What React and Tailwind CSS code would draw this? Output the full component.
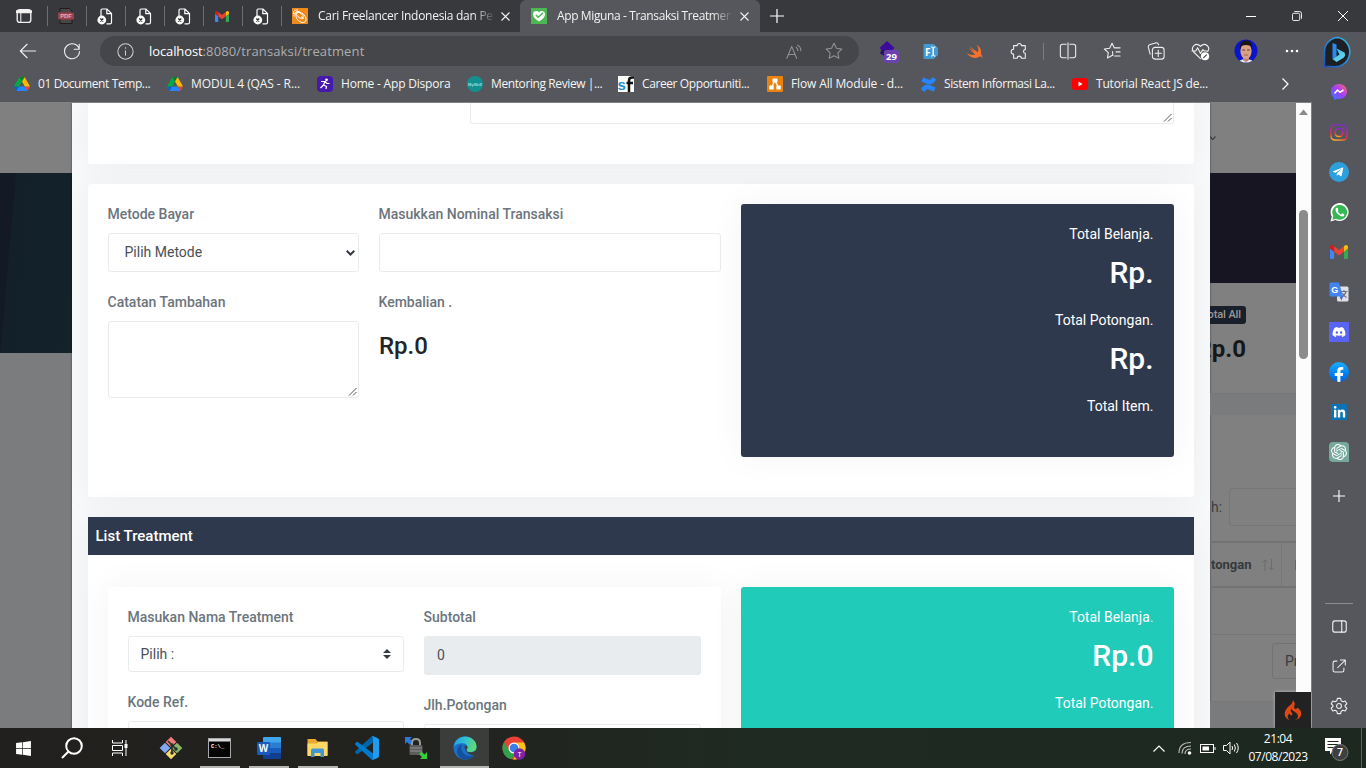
import React from "react";
import {
  FaWindows, FaFacebookF, FaTelegramPlane, FaDiscord, FaLinkedinIn,
} from "react-icons/fa";
import { SiOpenai, SiCodeigniter, SiConfluence } from "react-icons/si";

const UI = "font-['Open_Sans','Noto_Sans',sans-serif]";

const Line = ({ size = 20, w = 1.2, children, className = "" }) => (
  <svg width={size} height={size} viewBox="0 0 20 20" fill="none" stroke="currentColor" strokeWidth={w} strokeLinecap="round" strokeLinejoin="round" className={"shrink-0 " + className}>
    {children}
  </svg>
);

const Drive = () => (
  <svg width="16" height="14" viewBox="0 0 87.3 78" className="shrink-0">
    <path d="m6.6 66.85 3.85 6.65c.8 1.4 1.95 2.5 3.3 3.3l13.75-23.8h-27.5c0 1.55.4 3.1 1.2 4.5z" fill="#0066da" />
    <path d="m43.65 25-13.75-23.8c-1.35.8-2.5 1.9-3.3 3.3l-25.4 44a9.06 9.06 0 0 0-1.2 4.5h27.5z" fill="#00ac47" />
    <path d="m73.55 76.8c1.35-.8 2.5-1.9 3.3-3.3l1.6-2.75 7.65-13.25c.8-1.4 1.2-2.95 1.2-4.5h-27.5l5.85 11.5z" fill="#ea4335" />
    <path d="m43.65 25 13.75-23.8c-1.35-.8-2.9-1.2-4.5-1.2h-18.5c-1.6 0-3.15.45-4.5 1.2z" fill="#00832d" />
    <path d="m59.8 53h-32.3l-13.75 23.8c1.35.8 2.9 1.2 4.5 1.2h50.8c1.6 0 3.15-.45 4.5-1.2z" fill="#2684fc" />
    <path d="m73.4 26.5-12.7-22c-.8-1.4-1.95-2.5-3.3-3.3l-13.75 23.8 16.15 28h27.45c0-1.55-.4-3.1-1.2-4.5z" fill="#ffba00" />
  </svg>
);

const Gmail = ({ w = 14, h = 11 }) => (
  <svg width={w} height={h} viewBox="52 42 88 66" preserveAspectRatio="none" className="shrink-0">
    <path fill="#4285f4" d="M58 108h14V74L52 59v43c0 3.32 2.69 6 6 6" />
    <path fill="#34a853" d="M120 108h14c3.32 0 6-2.69 6-6V59l-20 15" />
    <path fill="#fbbc04" d="M120 48v26l20-15v-8c0-7.42-8.47-11.65-14.4-7.2" />
    <path fill="#ea4335" d="M72 74V48l24 18 24-18v26L96 92" />
    <path fill="#c5221f" d="M52 51v8l20 15V48l-5.6-4.2c-5.94-4.45-14.4-.22-14.4 7.2" />
  </svg>
);

const BrokenPage = () => (
  <svg width="16" height="17" viewBox="0 0 16 17" fill="none" className="shrink-0">
    <path d="M4 8V2.2Q4 1 5.2 1H10l4.500 4.500V14.600q0 1.200-1.200 1.200H9.500M9.800 1v4.700h4.700" stroke="#fff" strokeWidth="1.200" />
    <circle cx="4.800" cy="12" r="4.400" fill="#fff" />
    <path d="M3.300 10.500l3 3m0-3l-3 3" stroke="#222" strokeWidth="1.200" />
  </svg>
);

const Pdf = () => (
  <svg width="16" height="16" viewBox="0 0 16 16" className="shrink-0">
    <path d="M2 .5h9.500L14 3v12.500H2z" fill="#4a4547" stroke="#1f1c1e" />
    <rect x="0" y="4.500" width="16" height="7" rx="1" fill="#a0404a" />
    <text x="8" y="10.200" textAnchor="middle" fontSize="5.800" fontWeight="700" fontFamily="Liberation Sans" fill="#e0b4b4">PDF</text>
  </svg>
);

const Pinned = ({ children }) => (
  <div className="flex h-5 w-[39px] items-center justify-center border-l border-[#6d6e72] pr-[2px]">{children}</div>
);

const CloseX = () => (
  <svg width="9" height="9" viewBox="0 0 9 9" stroke="#f0f0f0" strokeWidth="1.100" className="shrink-0"><path d="M.5.5l8 8M8.500.5l-8 8" /></svg>
);

function TabBar() {
  return (
    <div className="flex h-8 shrink-0 items-center bg-[#38393d] text-[#f2f2f2]">
      <div className="flex w-[47px] justify-center">
        <Line size={16}><rect x="1.500" y="2" width="17" height="16" rx="3" strokeWidth="1.700" /><path d="M1.500 4.500h17" strokeWidth="4" /><path d="M6 5v12.500" strokeWidth="1.300" /></Line>
      </div>
      <Pinned><Pdf /></Pinned>
      <Pinned><BrokenPage /></Pinned>
      <Pinned><BrokenPage /></Pinned>
      <Pinned><BrokenPage /></Pinned>
      <Pinned><Gmail /></Pinned>
      <Pinned><BrokenPage /></Pinned>
      <div className="flex h-5 w-[239px] items-center border-l border-[#6d6e72] pl-[10px]">
        <svg width="16" height="16" viewBox="0 0 16 16" className="shrink-0">
          <rect width="16" height="16" fill="#f08a1c" />
          <g fill="none" stroke="#fff" strokeWidth=".9"><ellipse cx="9" cy="9.500" rx="6" ry="4" transform="rotate(45 9 9.500)" /><ellipse cx="7.500" cy="7" rx="4.500" ry="2.200" transform="rotate(38 7.500 7)" /><path d="M1.500 6C1 3 3 1.500 6 2M2 8.500C1.500 5 4 3 8 4M9 8.500l3 2" /></g>
        </svg>
        <div className="ml-[10px] w-[175px] overflow-hidden whitespace-nowrap text-[12px] tracking-[-0.28px] [mask-image:linear-gradient(to_right,#000_155px,transparent_178px)]">Cari Freelancer Indonesia dan Pekerjaan</div>
        <div className="ml-[8px]"><CloseX /></div>
      </div>
      <div className="flex h-8 w-[240px] items-center rounded-t-md bg-[#56575c] pl-[11px]">
        <svg width="16" height="16" viewBox="0 0 16 16" className="shrink-0">
          <rect width="16" height="16" fill="#4db551" />
          <path d="M8 13.500C4 11 2 9 2 6.200C2 3 6 2 8 4.400C10 2 14 3 14 6.200C14 9 12 11 8 13.500z" fill="#fff" />
          <path d="M4.800 7l2.500 2.300L12 4.800" fill="none" stroke="#4db551" strokeWidth="1.500" />
        </svg>
        <div className="ml-[10px] w-[174px] overflow-hidden whitespace-nowrap text-[12px] tracking-[-0.38px] [mask-image:linear-gradient(to_right,#000_155px,transparent_176px)]">App Miguna - Transaksi Treatment</div>
        <div className="ml-[9px]"><CloseX /></div>
      </div>
      <div className="ml-[10px]"><svg width="14" height="14" viewBox="0 0 14 14" stroke="#fff" strokeWidth="1.200"><path d="M7 0v14M0 7h14" /></svg></div>
      <div className="ml-auto flex">
        <div className="flex w-[46px] items-center justify-center"><svg width="10" height="10"><path d="M0 5.500h10" stroke="#fff" /></svg></div>
        <div className="flex w-[46px] items-center justify-center"><svg width="10" height="10" viewBox="0 0 11 11" fill="none" stroke="#fff"><rect x=".5" y="2.500" width="8" height="8" rx="1.500" /><path d="M2.500.5H8q2.500 0 2.500 2.500v5.500" /></svg></div>
        <div className="flex w-[46px] items-center justify-center"><svg width="10" height="10" stroke="#fff"><path d="M0 0l10 10M10 0L0 10" /></svg></div>
      </div>
    </div>
  );
}

const Cell = ({ children }) => <div className="flex w-11 items-center justify-center">{children}</div>;

function Toolbar() {
  return (
    <div className="flex h-[38px] shrink-0 items-center bg-[#56575c] text-[#eeeeee]">
      <div className="flex w-[56px] justify-center"><Line size={18}><path d="M18.500 10H1.500M9 2.500L1.500 10 9 17.500" /></Line></div>
      <div className="flex w-8 justify-center"><Line size={18}><path d="M18 8A8.300 8.300 0 1 0 18.300 10.500M18 2.500V8h-5.500" /></Line></div>
      <div className="ml-3 flex h-[30px] w-[759px] items-center rounded-full bg-[#45464a] pl-[17px] pr-[16px]">
        <Line size={17} className="text-[#cfcfcf]"><circle cx="10" cy="10" r="9" /><path d="M10 9v5.500" /><path d="M10 5.800v.2" strokeWidth="1.800" /></Line>
        <div className="ml-[15px] text-[13px] leading-[18px] tracking-[0.13px] text-[#adaeb1]"><span className="tracking-[-0.1px] text-white">localhost</span>:8080/transaksi/treatment</div>
        <Line size={17} w={1.3} className="ml-auto text-[#909194]"><path d="M1 18L6.700 4 12.500 18M3 13.500h7.500M12 5q2 1.500 2 4M13.500 2.500q4 2 4 6.500" /></Line>
        <Line size={18} className="ml-[22px] text-[#909194]"><path d="M10 1.500l2.700 5.500 6 .9-4.400 4.200 1.100 6L10 15.300 4.600 18.100l1.100-6L1.300 7.900l6-.9z" /></Line>
      </div>
      <div className="ml-[6px] flex items-center">
        <Cell>
          <svg width="26" height="26" viewBox="0 0 26 26" className="ml-[5px] mt-1">
            <path d="M10 1l7.500 7L15 10.500l2 3-7 4-7-4 2-3L2.500 8z" fill="#3d0b9c" /><path d="M4.500 10h11l1.500 3-7 4-7-4z" fill="#251a50" />
            <rect x="7" y="10" width="15" height="13" rx="2.500" fill="#6b42ad" />
            <text x="14.500" y="20" textAnchor="middle" fontSize="9.500" fontWeight="700" fontFamily="Open Sans" fill="#fff">29</text>
          </svg>
        </Cell>
        <Cell>
          <svg width="15" height="17" viewBox="0 0 15 17" className="mr-px"><path d="M1.500 1h9L15 5v7l-4.500 4h-9Q.5 16 .5 15V2q0-1 1-1z" fill="#439bd4" /><text x="2" y="12.500" fontSize="10" fontWeight="700" fontFamily="Open Sans" fill="#fff">F</text><path d="M8 4h1.500l.7 1v7l-.7 1H8M12.500 4H11l-.8 1v7l.8 1h1.500" stroke="#fff" fill="none" /></svg>
        </Cell>
        <Cell>
          <svg width="16" height="15" viewBox="0 0 16 15"><path d="M9.500.5c4.500 3 5.200 6.500 4.300 9.300 1.800 2 1.700 3.700 1.400 4.200-1-1.800-2.500-1.600-3.300-1.100C7 15.300 2.300 13 0 9c3 2 6 2.500 8.300 1.300C5.500 8.300 3.200 5.500 1.800 3.500 4 5.300 6.200 7 7.500 7.800 6.200 6.400 4.300 4 3.300 2.300c2.700 2.700 6 5 7.600 6C12 5.500 11 2.500 9.500.5z" fill="#f4722c" /></svg>
        </Cell>
        <Cell><Line size={18}><path d="M4 4h4a2.300 2.300 0 1 1 4.600 0H17v4.500a2 2 0 0 0 0 4V18h-4.400a2.300 2.300 0 0 0-4.600 0H4v-4.500A2.500 2.500 0 1 1 4 8z" /></Line></Cell>
      </div>
      <div className="ml-[2px] h-[17px] w-px bg-[#7c7d81]" />
      <div className="ml-[2px] flex items-center">
        <Cell><Line size={18}><path d="M8 2.500H4Q1.500 2.500 1.500 5v10Q1.500 17.500 4 17.500h4M12 2.500h4q2.500 0 2.500 2.500v10q0 2.500-2.500 2.500h-4M10 1v18" /></Line></Cell>
        <Cell><Line size={18}><path d="M13 6.500h6M14.500 11H19M13 15.500h6M10 15l-5 2.700.9-5.800L1.500 7.800l5.900-.9L10 1.500l2.500 5M10.500 10.500L11 15" /></Line></Cell>
        <Cell><Line size={18}><rect x="6" y="6" width="13" height="13" rx="3" /><path d="M12.500 9v7M9 12.500h7M3.500 13.500l-2-7.500Q1 3.500 3.500 2.800L9.500 1q2.500-.5 3.500 2" /></Line></Cell>
        <Cell><Line size={19}><path d="M10 17.500L2.800 10.500C-1 5.500 5-.5 10 4.500 15-.5 21 5.500 17.500 10M1 9.500h4l2-3.500 3 6 2.500-4 1.500 1.500h4" /><circle cx="14.800" cy="15" r="4.300" fill="#fff" stroke="none" /><path d="M13.300 16.500l3-3" stroke="#444" /></Line></Cell>
        <div className="flex w-[48px] items-center justify-center">
          <svg width="24" height="24" viewBox="0 0 24 24"><defs><clipPath id="av"><circle cx="12" cy="12" r="11.500" /></clipPath></defs><g clipPath="url(#av)"><rect width="24" height="24" fill="#0a14c8" /><path d="M2 26q3-6 10-6t10 6z" fill="#e9e7ea" /><path d="M9 16h6v5l-3 2-3-2z" fill="#b98468" /><ellipse cx="12" cy="12" rx="5.600" ry="8" fill="#d7a384" /><path d="M6.200 11C5 3 9 1.500 12 1.500s7 1.500 5.800 9.500L16.500 7q-4.500-2-9 0z" fill="#191512" /><path d="M8.300 11h2.600M13.100 11h2.600" stroke="#5a3a2a" /><path d="M10 16h4" stroke="#a8604f" /></g></svg>
        </div>
        <div className="flex w-11 items-center justify-center"><svg width="14" height="4"><circle cx="2" cy="2" r="1.300" fill="#fff" /><circle cx="7" cy="2" r="1.300" fill="#fff" /><circle cx="12" cy="2" r="1.300" fill="#fff" /></svg></div>
        <div className="ml-[8px] flex w-8 justify-center pt-[3px]">
          <svg width="32" height="36" viewBox="0 0 32 36"><defs><linearGradient id="bg1" x1="0" y1="1" x2="1" y2="0"><stop offset="0" stopColor="#1b4fc4" /><stop offset="1" stopColor="#35bfe8" /></linearGradient><linearGradient id="bg2" x1="0" y1="0" x2=".6" y2="1"><stop offset="0" stopColor="#35b8f0" /><stop offset="1" stopColor="#68d5e5" /></linearGradient></defs>
            <path d="M16 2.500A14 14 0 1 1 10 31.500H2.500V17A14 14 0 0 1 16 2.500z" fill="#1c2024" stroke="url(#bg1)" strokeWidth="1.600" />
            <path d="M10.500 8l4 1.500v12l-4 2.500z" fill="#268bf0" /><path d="M14.500 13.500l8 4q2 4-3 6.500l-5 3-4-3 7-4.500z" fill="url(#bg2)" /></svg>
        </div>
      </div>
    </div>
  );
}

const Mark = ({ w, icon, children, sp = "tracking-[-0.2px]" }) => (
  <div className={"flex items-center whitespace-nowrap " + w}>
    <div className="flex w-4 shrink-0 justify-center">{icon}</div>
    <div className={"ml-2 text-[12px] leading-4 " + sp}>{children}</div>
  </div>
);

function Bookmarks() {
  return (
    <div className="flex h-8 shrink-0 items-center bg-[#56575c] pb-[4px] pl-[14px] text-[#f4f4f4]">
      <Mark w="w-[153px]" sp="tracking-[-0.4px]" icon={<Drive />}>01 Document Temp...</Mark>
      <Mark w="w-[150px]" sp="tracking-[-0.1px]" icon={<Drive />}>MODUL 4 (QAS - R...</Mark>
      <Mark w="w-[150px]" icon={<svg width="16" height="16" viewBox="0 0 16 16"><rect width="16" height="16" rx="4" fill="#4718ac" /><circle cx="9.500" cy="3.800" r="1.400" fill="#fff" /><path d="M4 5.500h4L6.500 9l3 1.500L9 13M8 5.500l2 2h2.500M6.500 9l-3 3" stroke="#fff" fill="none" strokeWidth="1.200" /></svg>}>Home - App Dispora</Mark>
      <Mark w="w-[151px]" sp="tracking-[-0.4px]" icon={<svg width="16" height="16" viewBox="0 0 16 16"><circle cx="8" cy="8" r="8" fill="#12908f" /><text x="8" y="9.500" textAnchor="middle" fontSize="4" fontFamily="Liberation Sans" fontWeight="700" fill="#a9dcda">MySkill</text></svg>}>Mentoring Review |...</Mark>
      <Mark w="w-[149px]" sp="tracking-[-0.4px]" icon={<svg width="16" height="16" viewBox="0 0 16 16"><rect width="16" height="16" fill="#fff" /><text x="-.5" y="13.500" fontSize="15" fontFamily="Liberation Sans" fontWeight="700" fill="#1793cf">s</text><path d="M11 16V4.500Q11 1.500 14 1.500h2M8.500 7H15" stroke="#111" strokeWidth="2.500" fill="none" /></svg>}>Career Opportuniti...</Mark>
      <Mark w="w-[153px]" sp="tracking-[-0.13px]" icon={<svg width="16" height="16" viewBox="0 0 16 16"><rect width="16" height="16" rx="1" fill="#ea8210" /><path d="M8 4.500L4.500 11.500M8 4.500l3.500 7" stroke="#fff" strokeWidth="1.300" /><rect x="5.500" y="2.500" width="5" height="4" rx=".6" fill="#fff" /><rect x="2.200" y="9.500" width="4.500" height="4" rx=".6" fill="#fff" /><rect x="9.300" y="9.500" width="4.500" height="4" rx=".6" fill="#fff" /></svg>}>Flow All Module - d...</Mark>
      <Mark w="w-[152px]" sp="tracking-[-0.4px]" icon={<SiConfluence size={15} color="#2684ff" />}>Sistem Informasi La...</Mark>
      <Mark w="w-[150px]" icon={<svg width="16" height="12" viewBox="0 0 16 12"><rect width="16" height="12" rx="3" fill="#f00" /><path d="M6.500 3.500v5L10.500 6z" fill="#fff" /></svg>}>Tutorial React JS de...</Mark>
      <svg width="7" height="12" viewBox="0 0 7 12" className="ml-[60px]" fill="none" stroke="#fff" strokeWidth="1.200"><path d="M.5.5L6 6 .5 11.500" /></svg>
    </div>
  );
}

const Label = ({ children }) => <div className="mb-2 ml-[-0.5px] text-[14px] font-medium leading-[21px] text-[#6c757d]">{children}</div>;

const Grip = () => (
  <svg width="9" height="9" viewBox="0 0 9 9" className="mb-px mr-px" stroke="#444" strokeWidth=".9"><path d="M1 8.500L8.500 1M5 8.500L8.500 5" /></svg>
);

const Area = ({ className }) => (
  <div className={"flex items-end justify-end rounded-[3px] border border-[#e9ecef] bg-white " + className}><Grip /></div>
);

const Amount = ({ children }) => <div className="mb-[16px] mt-[7px] h-[42px] text-[30px] font-medium leading-[42px]">{children}</div>;

const Total = ({ children }) => <div className="text-[14px] leading-[21px]">{children}</div>;

const CARD = "shadow-[0_0_35px_0_rgba(0,0,0,0.05)]";

function Modal() {
  return (
    <div className="flex h-full w-[1138px] shrink-0 flex-col overflow-hidden bg-[#f8f9fb] px-4 shadow-[0_0_2px_rgba(0,0,0,0.5)]">
      <div className={"flex h-[61px] shrink-0 items-start justify-end rounded-b-[3px] bg-white pr-5 " + CARD}>
        <Area className="h-[21px] w-[704px] rounded-t-none border-t-0" />
      </div>
      <div className={"mt-5 flex h-[313px] shrink-0 gap-5 rounded-[3px] bg-white p-5 " + CARD}>
        <div className="w-[251px]">
          <Label>Metode Bayar</Label>
          <div className="mb-5 flex h-[39px] items-center justify-between rounded-[3px] border border-[#e9ecef] pl-[15.5px] pr-[3px] text-[14px] text-[#495057]">
            Pilih Metode
            <svg width="9" height="6" viewBox="0 0 9 6" fill="none" stroke="#343a40" strokeWidth="2"><path d="M.7.8L4.500 4.500 8.300.8" /></svg>
          </div>
          <Label>Catatan Tambahan</Label>
          <Area className="h-[77px]" />
        </div>
        <div className="w-[342px]">
          <Label>Masukkan Nominal Transaksi</Label>
          <div className="mb-5 h-[39px] rounded-[3px] border border-[#e9ecef]" />
          <Label>Kembalian .</Label>
          <div className="mt-[17px] text-[24px] font-medium leading-[32px] text-[#212529]">Rp.0</div>
        </div>
        <div className={"h-[253px] w-[433px] rounded-[3px] bg-[#2f394d] p-5 pr-[20.5px] text-right text-white " + CARD}>
          <Total>Total Belanja.</Total>
          <Amount>Rp.</Amount>
          <Total>Total Potongan.</Total>
          <Amount>Rp.</Amount>
          <Total>Total Item.</Total>
        </div>
      </div>
      <div className={"mt-5 shrink-0 bg-white " + CARD}>
        <div className="h-[38px] bg-[#2f394d] pl-[7.5px] text-[15px] font-medium leading-[38px] text-white">List Treatment</div>
        <div className="flex h-[240px] gap-5 px-5 pt-8">
          <div className={"flex w-[613px] gap-5 rounded-[3px] bg-white p-5 " + CARD}>
            <div className="w-[276px]">
              <Label>Masukan Nama Treatment</Label>
              <div className="mb-5 flex h-9 items-center justify-between rounded-[3px] border border-[#e9ecef] pl-[11.5px] pr-3 text-[14px] text-[#495057]">
                Pilih :
                <svg width="8" height="10" viewBox="0 0 8 10" fill="#343a40"><path d="M0 4l4-4 4 4zM0 6l4 4 4-4z" /></svg>
              </div>
              <Label>Kode Ref.</Label>
              <div className="h-9 rounded-[3px] border border-[#e9ecef]" />
            </div>
            <div className="w-[277px]">
              <Label>Subtotal</Label>
              <div className="mb-5 flex h-[39px] items-center rounded-[3px] bg-[#e9ecef] px-[13px] text-[14px] text-[#495057]">0</div>
              <Label>Jlh.Potongan</Label>
              <div className="h-9 rounded-[3px] border border-[#e9ecef]" />
            </div>
          </div>
          <div className={"w-[433px] rounded-[3px] bg-[#20cbb9] p-5 pr-[20.5px] text-right text-white " + CARD}>
            <Total>Total Belanja.</Total>
            <Amount>Rp.0</Amount>
            <Total>Total Potongan.</Total>
          </div>
        </div>
      </div>
    </div>
  );
}

function Page() {
  return (
    <div className="relative flex h-[625px] overflow-hidden bg-[#808080] font-[Roboto,sans-serif]">
      <div className="flex w-[72px] shrink-0 flex-col">
        <div className="h-[70px]" />
        <div className="h-[180px] bg-[linear-gradient(95deg,#141a25_0%,#141a25_18%,#13202a_19%,#13232a_100%)]" />
        <div className="flex-1 bg-[#7b7c7e]" />
      </div>
      <Modal />
      <div className="flex w-[86px] shrink-0 flex-col overflow-hidden">
        <div className="flex h-[70px] shrink-0 items-center">
          <svg width="6" height="5" viewBox="0 0 6 5" fill="none" stroke="#3d4145" strokeWidth="1.300"><path d="M0 .5l2.500 3L5.500.5" /></svg>
        </div>
        <div className="h-[110px] shrink-0 bg-[#161521]" />
        <div className="flex h-[110px] w-[36px] shrink-0 flex-col items-end pt-[23px]">
          <div className="flex h-[18px] w-[60px] shrink-0 items-center justify-end rounded-[3px] bg-[#191f2b] pr-[5px] text-[11px] font-medium tracking-[-0.1px] text-[#999]">Total All</div>
          <div className="mt-[9px] whitespace-nowrap text-[24px] font-bold leading-[32px] text-[#151719]">Rp.0</div>
        </div>
        <div className="h-[22px] shrink-0 border-t border-[#777] bg-[#7a7b7d]" />
        <div className="flex h-[127px] shrink-0 items-end pb-4">
          <div className="mb-2 w-[19px] shrink-0 pl-[1px] text-[14px] text-[#393d41]">h:</div>
          <div className="h-[38px] w-[90px] shrink-0 rounded-[3px] border border-[#747678]" />
        </div>
        <div className="-mt-px flex h-[47px] shrink-0 items-center border-y-2 border-[#717375]">
          <div className="flex h-full w-[72px] shrink-0 items-center border-r border-[#747678] pl-px text-[13px] font-bold text-[#35393d]">
            tongan
            <svg width="13" height="12" viewBox="0 0 13 12" fill="none" stroke="#6a6b6d" className="ml-[10px] shrink-0"><path d="M3 12V1M.5 3.500L3 1l2.500 2.500M9.500 0v11M7 8.500L9.500 11 12 8.500" /></svg>
          </div>
          <div className="ml-[13px] h-[10px] w-px shrink-0 bg-[#a3561f]" />
        </div>
        <div className="h-[47px] shrink-0 border-b border-[#747678]" />
        <div className="h-[66px] shrink-0 pl-[62px] pt-2">
          <div className="flex h-9 w-20 items-center rounded-[3px] border border-[#707274] pl-3 text-[14px] text-[#393d41]">Previous</div>
        </div>
        <div className="flex-1 border-t border-[#757779] bg-[#7a7b7d]" />
      </div>
      <div className="flex w-[15px] shrink-0 flex-col items-center bg-[#fcfcfc] pt-[6px]">
        <svg width="9" height="6" viewBox="0 0 9 6"><path d="M0 6l4.500-5.500L9 6z" fill="#8a8a8a" /></svg>
        <div className="mt-[95px] h-[149px] w-[9px] rounded-full bg-[#8b8b8b]" />
      </div>
      <div className="absolute bottom-0 left-[1275px] flex h-9 w-9 items-center justify-center bg-[#222] shadow-[0_0_3px_rgba(255,255,255,0.5)]">
        <SiCodeigniter size={20} color="#dd4814" />
      </div>
      <div className="w-px shrink-0 bg-[#808185]" />
    </div>
  );
}

const App20 = ({ children }) => <div className="flex h-10 shrink-0 items-center justify-center">{children}</div>;

function Sidebar() {
  return (
    <div className="flex w-[54px] shrink-0 flex-col items-center bg-[#56575c] pt-[2px] text-[#f0f0f0]">
      <App20><svg width="16" height="16" viewBox="0 0 16 16"><defs><linearGradient id="ms" x1="0" y1="1" x2="1" y2="0"><stop offset="0" stopColor="#1a8bff" /><stop offset=".5" stopColor="#a43bff" /><stop offset="1" stopColor="#ff6a6a" /></linearGradient></defs><path d="M8 0C12.500 0 16 3.200 16 7.500S12.500 15 8 15q-1.200 0-2.200-.3L3 16v-2.500Q0 11.500 0 7.500C0 3.200 3.500 0 8 0z" fill="url(#ms)" /><path d="M3.500 9.500L6.500 6l2.500 2.200L12.500 6" stroke="#fff" strokeWidth="1.500" fill="none" /></svg></App20>
      <App20><svg width="18" height="17" viewBox="0 0 18 17"><defs><linearGradient id="ig" x1="0.200" y1="1" x2=".5" y2="0"><stop offset="0" stopColor="#f9b52c" /><stop offset=".3" stopColor="#e0343f" /><stop offset=".6" stopColor="#c32d8d" /><stop offset="1" stopColor="#7a2fc0" /></linearGradient></defs><g fill="none" stroke="url(#ig)" strokeWidth="1.600"><rect x="1" y="1" width="16" height="15" rx="4" /><circle cx="9" cy="8.500" r="4" /></g><circle cx="13.500" cy="4.300" r="1" fill="#b030a0" /></svg></App20>
      <App20><div className="flex h-5 w-5 items-center justify-center rounded-full bg-[#2ba0dc]"><FaTelegramPlane size={12} color="#fff" className="mr-[2px]" /></div></App20>
      <App20><svg width="19" height="19" viewBox="0 0 19 19"><path d="M.5 18.500l1.300-5A9 9 0 1 1 5.500 17z" fill="#fff" /><path d="M2.300 16.700l1-3.700a7.400 7.400 0 1 1 2.700 2.700z" fill="#36b852" /><path d="M6.500 4.800C4.500 6 6 9.500 8 11.300s5 3 6.200 1.300q.5-1.300-.3-1.600l-1.600-.8-1.300 1.200Q9 10.500 7.700 8.200l.8-1.300-.8-1.800q-.3-.6-1.200-.3z" fill="#fff" /></svg></App20>
      <App20><Gmail w={18} h={14} /></App20>
      <App20><svg width="20" height="20" viewBox="0 0 20 20"><rect x="8" y="4.500" width="11.500" height="15" rx="1.500" fill="#dfe1e4" /><path d="M11.500 9.500h7M15 8v1.500M17 9.500q-1 4-4.500 5.500M13.500 11q1 3 4 4.500" stroke="#6b7280" strokeWidth="1.100" fill="none" /><path d="M1.500.5h8.500l4 14H1.500Q.5 14.500.5 13.500v-12Q.5.5 1.500.5z" fill="#4285f0" /><path d="M10.500 14.500h3.500l-1.500 4z" fill="#3367d6" /><text x="2.300" y="10.500" fontSize="9" fontFamily="Liberation Sans" fontWeight="700" fill="#fff">G</text></svg></App20>
      <App20><div className="flex h-5 w-5 items-center justify-center bg-[#5865f2]"><FaDiscord size={14} color="#fff" /></div></App20>
      <App20><div className="flex h-5 w-5 items-end justify-center overflow-hidden rounded-full bg-gradient-to-b from-[#19aeff] to-[#0560e0]"><FaFacebookF size={16} color="#fff" className="translate-y-[1px]" /></div></App20>
      <App20><div className="flex h-4 w-4 items-center justify-center rounded-[1px] bg-[#0a74b7]"><FaLinkedinIn size={13} color="#fff" /></div></App20>
      <App20><div className="flex h-5 w-5 items-center justify-center rounded-[4px] rounded-br-none bg-[#75a99c]"><SiOpenai size={16} color="#fff" /></div></App20>
      <div className="flex h-[47px] shrink-0 items-center"><svg width="12" height="12" stroke="#fff" strokeWidth="1.100"><path d="M6 0v12M0 6h12" /></svg></div>
      <div className="mt-[84px] h-px w-[28px] shrink-0 bg-[#8b8c90]" />
      <div className="mt-[2px]">
        <App20><Line size={15} w={1.5}><rect x="1" y="2.500" width="18" height="15" rx="3" /><path d="M13 2.500v15" /></Line></App20>
        <App20><Line size={14} w={1.5}><path d="M7 3H4Q1.500 3 1.500 5.500V16q0 2.500 2.500 2.500h10.500Q17 18.500 17 16v-3M12 1.500h7v7M19 1.500L8 12.500" /></Line></App20>
        <App20><Line size={18}><circle cx="10" cy="10" r="2.700" /><path d="M8.200 1.500h3.600l.6 2.600 2 1.100 2.500-.8 1.800 3.100-1.900 1.800v1.400l1.900 1.800-1.800 3.100-2.500-.8-2 1.100-.6 2.600H8.200l-.6-2.600-2-1.100-2.500.8-1.800-3.100 1.900-1.800V9.300L1.300 7.500l1.800-3.100 2.500.8 2-1.100z" /></Line></App20>
      </div>
    </div>
  );
}

const Task = ({ children, open, active }) => (
  <div className={"flex h-10 w-[49px] shrink-0 flex-col items-center " + (active ? "bg-[#3b3d3b]" : "")}>
    <div className="flex h-[38px] items-center pt-[1px]">{children}</div>
    <div className={"h-[2px] " + (active ? "w-full bg-[#b5b5b3]" : open ? "w-10 bg-[#b5b5b3]" : "w-10")} />
  </div>
);

function Taskbar() {
  return (
    <div className="flex h-10 shrink-0 items-center bg-[linear-gradient(90deg,#21201e_0%,#22221f_30%,#1f2a23_55%,#1d2820_100%)] text-white">
      <div className="flex w-12 justify-center pr-px"><FaWindows size={17} /></div>
      <div className="flex w-12 justify-center"><svg width="22" height="22" viewBox="0 0 22 22" fill="none" stroke="#fff" strokeWidth="2"><circle cx="13" cy="9" r="7.800" /><path d="M7.500 14.500L1 21" /></svg></div>
      <div className="flex w-[50px] justify-center pr-[2px]"><svg width="16" height="16" viewBox="0 0 16 16" fill="none" stroke="#fff"><path d="M.5 0v3h10V0M.5 16v-3h10v3M.5 5.500h10v5H.5zM14 0v16" /><rect x="13" y="4.500" width="2" height="3" fill="#fff" /></svg></div>
      <Task><svg width="24" height="24" viewBox="0 0 24 24"><g transform="rotate(45 12 12)"><rect x="4" y="4" width="7.500" height="7.500" fill="#f37b7b" /><rect x="12.500" y="4" width="7.500" height="7.500" fill="#88b76b" /><rect x="4" y="12.500" width="7.500" height="7.500" fill="#83aaf0" /><rect x="12.500" y="12.500" width="7.500" height="7.500" fill="#fadb6d" /></g><path d="M9 5l4 4v9M13 9l4 4" stroke="#29302a" strokeWidth="1.600" fill="none" /><circle cx="13" cy="9" r="1.700" fill="#29302a" /><circle cx="13" cy="17" r="1.700" fill="#29302a" /><circle cx="17" cy="13" r="1.700" fill="#29302a" /></svg></Task>
      <Task open><svg width="23" height="20" viewBox="0 0 23 20"><rect x=".5" y=".5" width="22" height="19" fill="#050505" stroke="#a9a9a9" /><rect x="1" y="1" width="21" height="2.500" fill="#d9d9d9" /><text x="3" y="9.500" fontSize="5.500" fontFamily="Liberation Mono" fontWeight="700" fill="#fff">C:\_</text></svg></Task>
      <Task open><svg width="24" height="22" viewBox="0 0 24 22"><path d="M7 0h16q1 0 1 1v5H6V1q0-1 1-1z" fill="#41a5ee" /><path d="M6 5.500h18V11H6z" fill="#2b7cd3" /><path d="M6 11h18v5.500H6z" fill="#185abd" /><path d="M6 16.500h18V21q0 1-1 1H7q-1 0-1-1z" fill="#103f91" /><rect x="0" y="5" width="13" height="13" rx="1.200" fill="#185abd" /><text x="6.500" y="15" textAnchor="middle" fontSize="10" fontFamily="Liberation Sans" fontWeight="700" fill="#fff">W</text></svg></Task>
      <Task open><svg width="21" height="20" viewBox="0 0 21 20"><path d="M.5 1h8l2 2.500h10V17H.5z" fill="#e8a92e" /><path d="M.5 5.500h9l2-1.500h9v14H.5z" fill="#ffd764" /><path d="M4 19v-7q0-1.500 1.500-1.500h10Q17 10.500 17 12v7h-3.500v-4h-6v4z" fill="#3f95d6" /></svg></Task>
      <Task><svg width="24" height="24" viewBox="0 0 100 100"><path d="M96.500 10.800 75.900.9c-2.400-1.100-5.200-.7-7.100 1.200L1.300 63.600c-1.800 1.700-1.800 4.500 0 6.200l5.500 5c1.500 1.300 3.700 1.400 5.300.2L93.400 13.400c2.700-2.100 6.600-.1 6.600 3.300z" fill="#0065a9" /><path d="M96.500 89.200l-20.600 9.900c-2.400 1.100-5.200.7-7.100-1.200L1.300 36.400c-1.800-1.700-1.800-4.500 0-6.200l5.500-5c1.500-1.300 3.700-1.400 5.300-.2l81.300 61.600c2.700 2.100 6.600.1 6.600-3.300z" fill="#007acc" /><path d="M75.900 99.100c-2.400 1.100-5.200.7-7.100-1.200 2.300 2.300 6.200.7 6.200-2.600V4.700c0-3.300-3.900-4.900-6.200-2.600 1.900-1.900 4.700-2.300 7.100-1.200l20.600 9.900c2.200 1 3.500 3.200 3.500 5.700v67c0 2.400-1.400 4.600-3.500 5.700z" fill="#1f9cf0" /></svg></Task>
      <Task><svg width="24" height="24" viewBox="0 0 24 24"><path d="M1 1h7L6 3l3 3-3 3-3-3-2 2z" fill="#2a78dc" /><path d="M8 9V7q0-4 4-4t4 4v2" stroke="#9a9a9a" strokeWidth="2" fill="none" /><rect x="5.500" y="9" width="13" height="10" rx="1" fill="#5c5c5c" /><path d="M6 12h12M6 15h12" stroke="#929292" /><path d="M23 23h-7l2-2-3-3 2.500-2.500 3 3 2.500-2.500z" fill="#37cf3b" /></svg></Task>
      <Task active><svg width="24" height="24" viewBox="0 0 24 24"><defs><linearGradient id="e1" x1="0" y1=".3" x2="1" y2=".5"><stop offset="0" stopColor="#259de5" /><stop offset=".5" stopColor="#30c3d0" /><stop offset="1" stopColor="#65dc6a" /></linearGradient></defs><circle cx="12" cy="12" r="11.500" fill="#1b6fc9" /><path d="M.6 11C1.500 4.500 6.500.5 12 .5 18.500.5 23.500 5 23.500 10.500c0 4-3 5.500-6 5.500-2.500 0-4-.8-4-1.800s1-1.200 1-3c0-2-2-4-5-4-4.500 0-8 2-8.900 3.800z" fill="url(#e1)" /><path d="M9 8.500c-2 4 .5 11.500 8 11.500 2.500 0 4-.8 5-1.500-3 4.500-8.500 6-13.500 4C2 19 3 10 9 8.500z" fill="#15509e" /><path d="M11.500 10q2.500-1.500 3 1c0 2-1.500 2.200-1 3.700.7 1.700 5.500 2.500 9 0 q1.500-1 1.500 1l-1.600 2.800c-5 2.500-11.200-3-10.900-8.500z" fill="#3b3d3b" /></svg></Task>
      <Task><svg width="24" height="24" viewBox="0 0 48 48"><circle cx="24" cy="24" r="23" fill="#ea4335" /><path d="M4 12.500L14.500 29A11 11 0 0 0 24 35l-4 11.700A23 23 0 0 1 4 12.500z" fill="#2fa24c" /><path d="M24 13h20.200A23 23 0 0 1 22 47l11.500-17.500A11 11 0 0 0 24 13z" fill="#fbc116" /><circle cx="24" cy="24" r="11" fill="#fff" /><circle cx="24" cy="24" r="8.700" fill="#3b7de9" /><circle cx="35" cy="36" r="11.500" fill="#7b22a5" /><text x="35" y="41" textAnchor="middle" fontSize="14" fontFamily="Roboto" fill="#fff">T</text></svg></Task>
      <div className="ml-auto flex items-center">
        <svg width="12" height="7" viewBox="0 0 12 7" fill="none" stroke="#fff" strokeWidth="1.200"><path d="M.5 6.500L6 1l5.500 5.500" /></svg>
        <svg width="14" height="14" viewBox="0 0 14 14" fill="none" stroke="#bbb" strokeWidth="1.200" className="ml-[13px]"><path d="M1 12Q1 1.500 13 1.500M4 12.500Q4 5 13 5M7 13q0-5 6-5" /><circle cx="11.500" cy="12" r="1.800" fill="#fff" stroke="none" /></svg>
        <svg width="16" height="9" viewBox="0 0 16 9" fill="none" stroke="#fff" className="ml-[8px]"><rect x=".5" y=".5" width="13" height="8" /><path d="M15 3v3" /><rect x="2.500" y="2.500" width="6.500" height="4" fill="#fff" stroke="none" /></svg>
        <svg width="17" height="14" viewBox="0 0 17 14" fill="none" stroke="#fff" className="ml-[7px]"><path d="M.5 4.500h3L7 1v12L3.500 9.500h-3zM9 5q1.200 2 0 4M11.300 3.500q2.200 3.500 0 7M13.500 2q3.500 5 0 10" /></svg>
        <div className="ml-[5px] w-[66px] whitespace-nowrap text-center text-[12px] leading-[18px] tracking-[-0.45px]"><div>21:04</div><div>07/08/2023</div></div>
        <svg width="26" height="26" viewBox="0 0 26 26" className="ml-[13px]"><path d="M1 3h16v13H9l-3 3.500V16H1z" fill="#fff" /><path d="M3.500 6.500h11M3.500 9.500h11M3.500 12.500h7" stroke="#1d2820" /><circle cx="16" cy="17.500" r="8" fill="#3d403e" stroke="#777" /><text x="16" y="21.300" textAnchor="middle" fontSize="10.500" fontFamily="Open Sans" fontWeight="600" fill="#fff">7</text></svg>
        <div className="ml-[11px] mr-[4px] h-10 w-px bg-[#5b635e]" />
      </div>
    </div>
  );
}

export default function App() {
  return (
    <div className={"flex h-[768px] w-[1366px] flex-col overflow-hidden bg-[#56575c] " + UI}>
      <TabBar />
      <Toolbar />
      <div className="flex h-[658px] shrink-0">
        <div className="flex w-[1312px] shrink-0 flex-col">
          <Bookmarks />
          <div className="h-px shrink-0 bg-[#808185]" />
          <Page />
        </div>
        <Sidebar />
      </div>
      <Taskbar />
    </div>
  );
}
